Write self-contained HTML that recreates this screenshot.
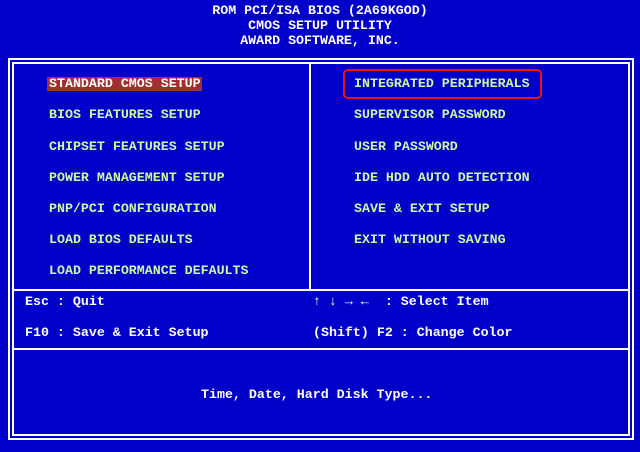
<!DOCTYPE html>
<html><head><style>
body{margin:0;width:640px;height:452px;background:#0000c8;overflow:hidden;position:relative;font-family:"Liberation Mono",monospace;font-weight:bold;font-size:13.3px;}
.t{position:absolute;white-space:pre;line-height:14px;color:#d0f8a0;}
.w{color:#fff;}
.b{position:absolute;border:2px solid #fff;box-sizing:border-box;}
.l{position:absolute;background:#fff;}
</style></head><body>
<div class="t w" style="left:0;width:640px;text-align:center;top:4px">ROM PCI/ISA BIOS (2A69KGOD)</div>
<div class="t w" style="left:0;width:640px;text-align:center;top:19px">CMOS SETUP UTILITY</div>
<div class="t w" style="left:0;width:640px;text-align:center;top:34px">AWARD SOFTWARE, INC.</div>
<div class="b" style="left:8px;top:58px;width:626px;height:382px"></div>
<div class="b" style="left:12px;top:62px;width:618px;height:374px"></div>
<div class="l" style="left:309px;top:62px;width:2px;height:228px"></div>
<div class="l" style="left:12px;top:289px;width:618px;height:2px"></div>
<div class="l" style="left:12px;top:348px;width:618px;height:2px"></div>
<div style="position:absolute;left:47px;top:77px;width:155px;height:14px;background:#a03030"></div>
<div style="position:absolute;left:343px;top:69px;width:199px;height:30px;border:2px solid #f01010;border-radius:5px;box-sizing:border-box"></div>
<div class="t w" style="left:49px;top:77px">STANDARD CMOS SETUP</div>
<div class="t" style="left:49px;top:108px">BIOS FEATURES SETUP</div>
<div class="t" style="left:49px;top:140px">CHIPSET FEATURES SETUP</div>
<div class="t" style="left:49px;top:171px">POWER MANAGEMENT SETUP</div>
<div class="t" style="left:49px;top:202px">PNP/PCI CONFIGURATION</div>
<div class="t" style="left:49px;top:233px">LOAD BIOS DEFAULTS</div>
<div class="t" style="left:49px;top:264px">LOAD PERFORMANCE DEFAULTS</div>
<div class="t" style="left:354px;top:77px">INTEGRATED PERIPHERALS</div>
<div class="t" style="left:354px;top:108px">SUPERVISOR PASSWORD</div>
<div class="t" style="left:354px;top:140px">USER PASSWORD</div>
<div class="t" style="left:354px;top:171px">IDE HDD AUTO DETECTION</div>
<div class="t" style="left:354px;top:202px">SAVE &amp; EXIT SETUP</div>
<div class="t" style="left:354px;top:233px">EXIT WITHOUT SAVING</div>
<div class="t w" style="left:25px;top:295px">Esc : Quit</div>
<div class="t w" style="left:25px;top:326px">F10 : Save &amp; Exit Setup</div>
<div class="t w" style="left:313px;top:295px">↑ ↓ → ←  : Select Item</div>
<div class="t w" style="left:313px;top:326px">(Shift) F2 : Change Color</div>
<div class="t w" style="left:201px;top:388px">Time, Date, Hard Disk Type...</div>
</body></html>
